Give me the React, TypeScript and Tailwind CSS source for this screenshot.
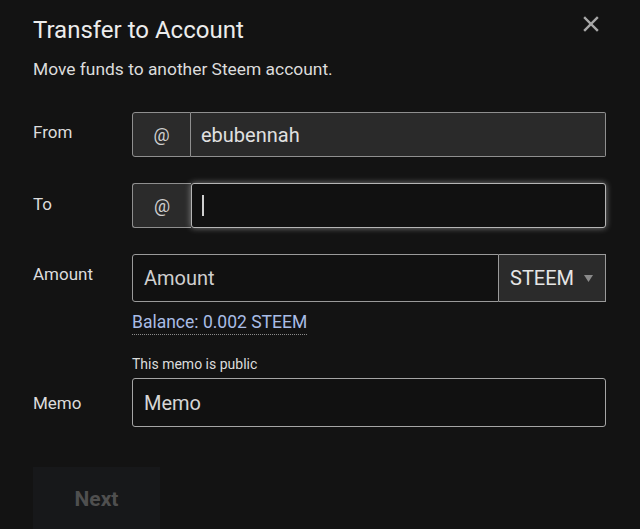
import React from "react";

export default function App() {
  return (
    <div
      className="w-[640px] h-[529px] overflow-hidden bg-[#131313] relative text-[#e6e6e6]"
      style={{ fontFamily: "Roboto, 'Noto Sans', sans-serif" }}
    >
      <div className="pl-[33px] pr-[34px]">
        <div className="flex items-start justify-between">
          <h1 className="mt-[16px] text-[24px] leading-[28px] font-normal text-[#ececec]">
            Transfer to Account
          </h1>
          <button className="mt-[16px] mr-[7px] w-[16px] h-[16px] text-[#a8a8a8]">
            <svg viewBox="0 0 16 16" width="16" height="16" fill="none" stroke="currentColor" strokeWidth="2.4" strokeLinecap="square">
              <line x1="2" y1="2" x2="14" y2="14" />
              <line x1="14" y1="2" x2="2" y2="14" />
            </svg>
          </button>
        </div>
        <p className="mt-[15px] text-[17.4px] leading-[20px] text-[#dcdcdc]">
          Move funds to another Steem account.
        </p>

        {/* From */}
        <div className="mt-[33px] flex">
          <div className="w-[99px] pt-[10px] text-[17px] leading-[20px] text-[#dcdcdc]">From</div>
          <div className="flex-1 flex h-[45px]">
            <div className="w-[59px] flex items-center justify-center bg-[#2b2b2b] border border-[#8f8f8f] rounded-l-[3px] text-[18px] text-[#cfcfcf]">
              @
            </div>
            <div className="flex-1 flex items-center bg-[#2a2a2a] border border-l-0 border-[#8f8f8f] rounded-r-[2px] pl-[10px] text-[20px] text-[#e0e0e0]">
              ebubennah
            </div>
          </div>
        </div>

        {/* To */}
        <div className="mt-[26px] flex">
          <div className="w-[99px] pt-[11px] text-[17px] leading-[20px] text-[#dcdcdc]">To</div>
          <div className="flex-1 flex h-[45px]">
            <div className="w-[59px] flex items-center justify-center bg-[#2b2b2b] border border-r-0 border-[#8f8f8f] rounded-l-[3px] text-[18px] text-[#cfcfcf]">
              @
            </div>
            <div className="flex-1 flex items-center bg-[#111111] border border-[#b5b5b5] rounded-[3px] pl-[10px] shadow-[0_0_6px_rgba(255,255,255,0.45)]">
              <div className="w-[1.5px] h-[21px] bg-[#cfcfcf]" />
            </div>
          </div>
        </div>

        {/* Amount */}
        <div className="mt-[26px] flex">
          <div className="w-[99px] pt-[10px] text-[17px] leading-[20px] text-[#dcdcdc]">Amount</div>
          <div className="flex-1">
            <div className="flex h-[48px]">
              <div className="flex-1 flex items-center bg-[#111111] border border-[#9a9a9a] rounded-l-[3px] pl-[11px] text-[20px] text-[#cfcfcf]">
                Amount
              </div>
              <div className="w-[107px] flex items-center justify-between bg-[#2b2b2b] border border-l-0 border-[#9a9a9a] pl-[11px] pr-[12px] text-[20px] text-[#e6e6e6]">
                <span>STEEM</span>
                <svg width="9" height="7" viewBox="0 0 9 7" className="mt-[1px]">
                  <polygon points="0,0 9,0 4.5,7" fill="#8a8a8a" />
                </svg>
              </div>
            </div>
            <div className="mt-[9px]">
              <span className="inline-block text-[17.5px] leading-[20px] pb-[2px] text-[#a9bde6] border-b border-dotted border-[#8c8c8c]">
                Balance: 0.002 STEEM
              </span>
            </div>
          </div>
        </div>

        {/* Memo */}
        <div className="flex">
          <div className="w-[99px] pt-[39px]">
            <div className="pt-[19px] text-[17px] leading-[20px] text-[#dcdcdc]">Memo</div>
          </div>
          <div className="flex-1">
            <div className="mt-[21px] text-[14px] leading-[16px] text-[#dcdcdc]">This memo is public</div>
            <div className="mt-[6px] h-[49px] flex items-center bg-[#111111] border border-[#a5a5a5] rounded-[3px] pl-[11px] text-[20px] text-[#d6d6d6]">
              Memo
            </div>
          </div>
        </div>

        <button className="mt-[40px] w-[127px] h-[66px] bg-[#17181a] text-[21px] font-bold text-[#4f4f4f] flex items-center justify-center">
          Next
        </button>
      </div>
    </div>
  );
}
